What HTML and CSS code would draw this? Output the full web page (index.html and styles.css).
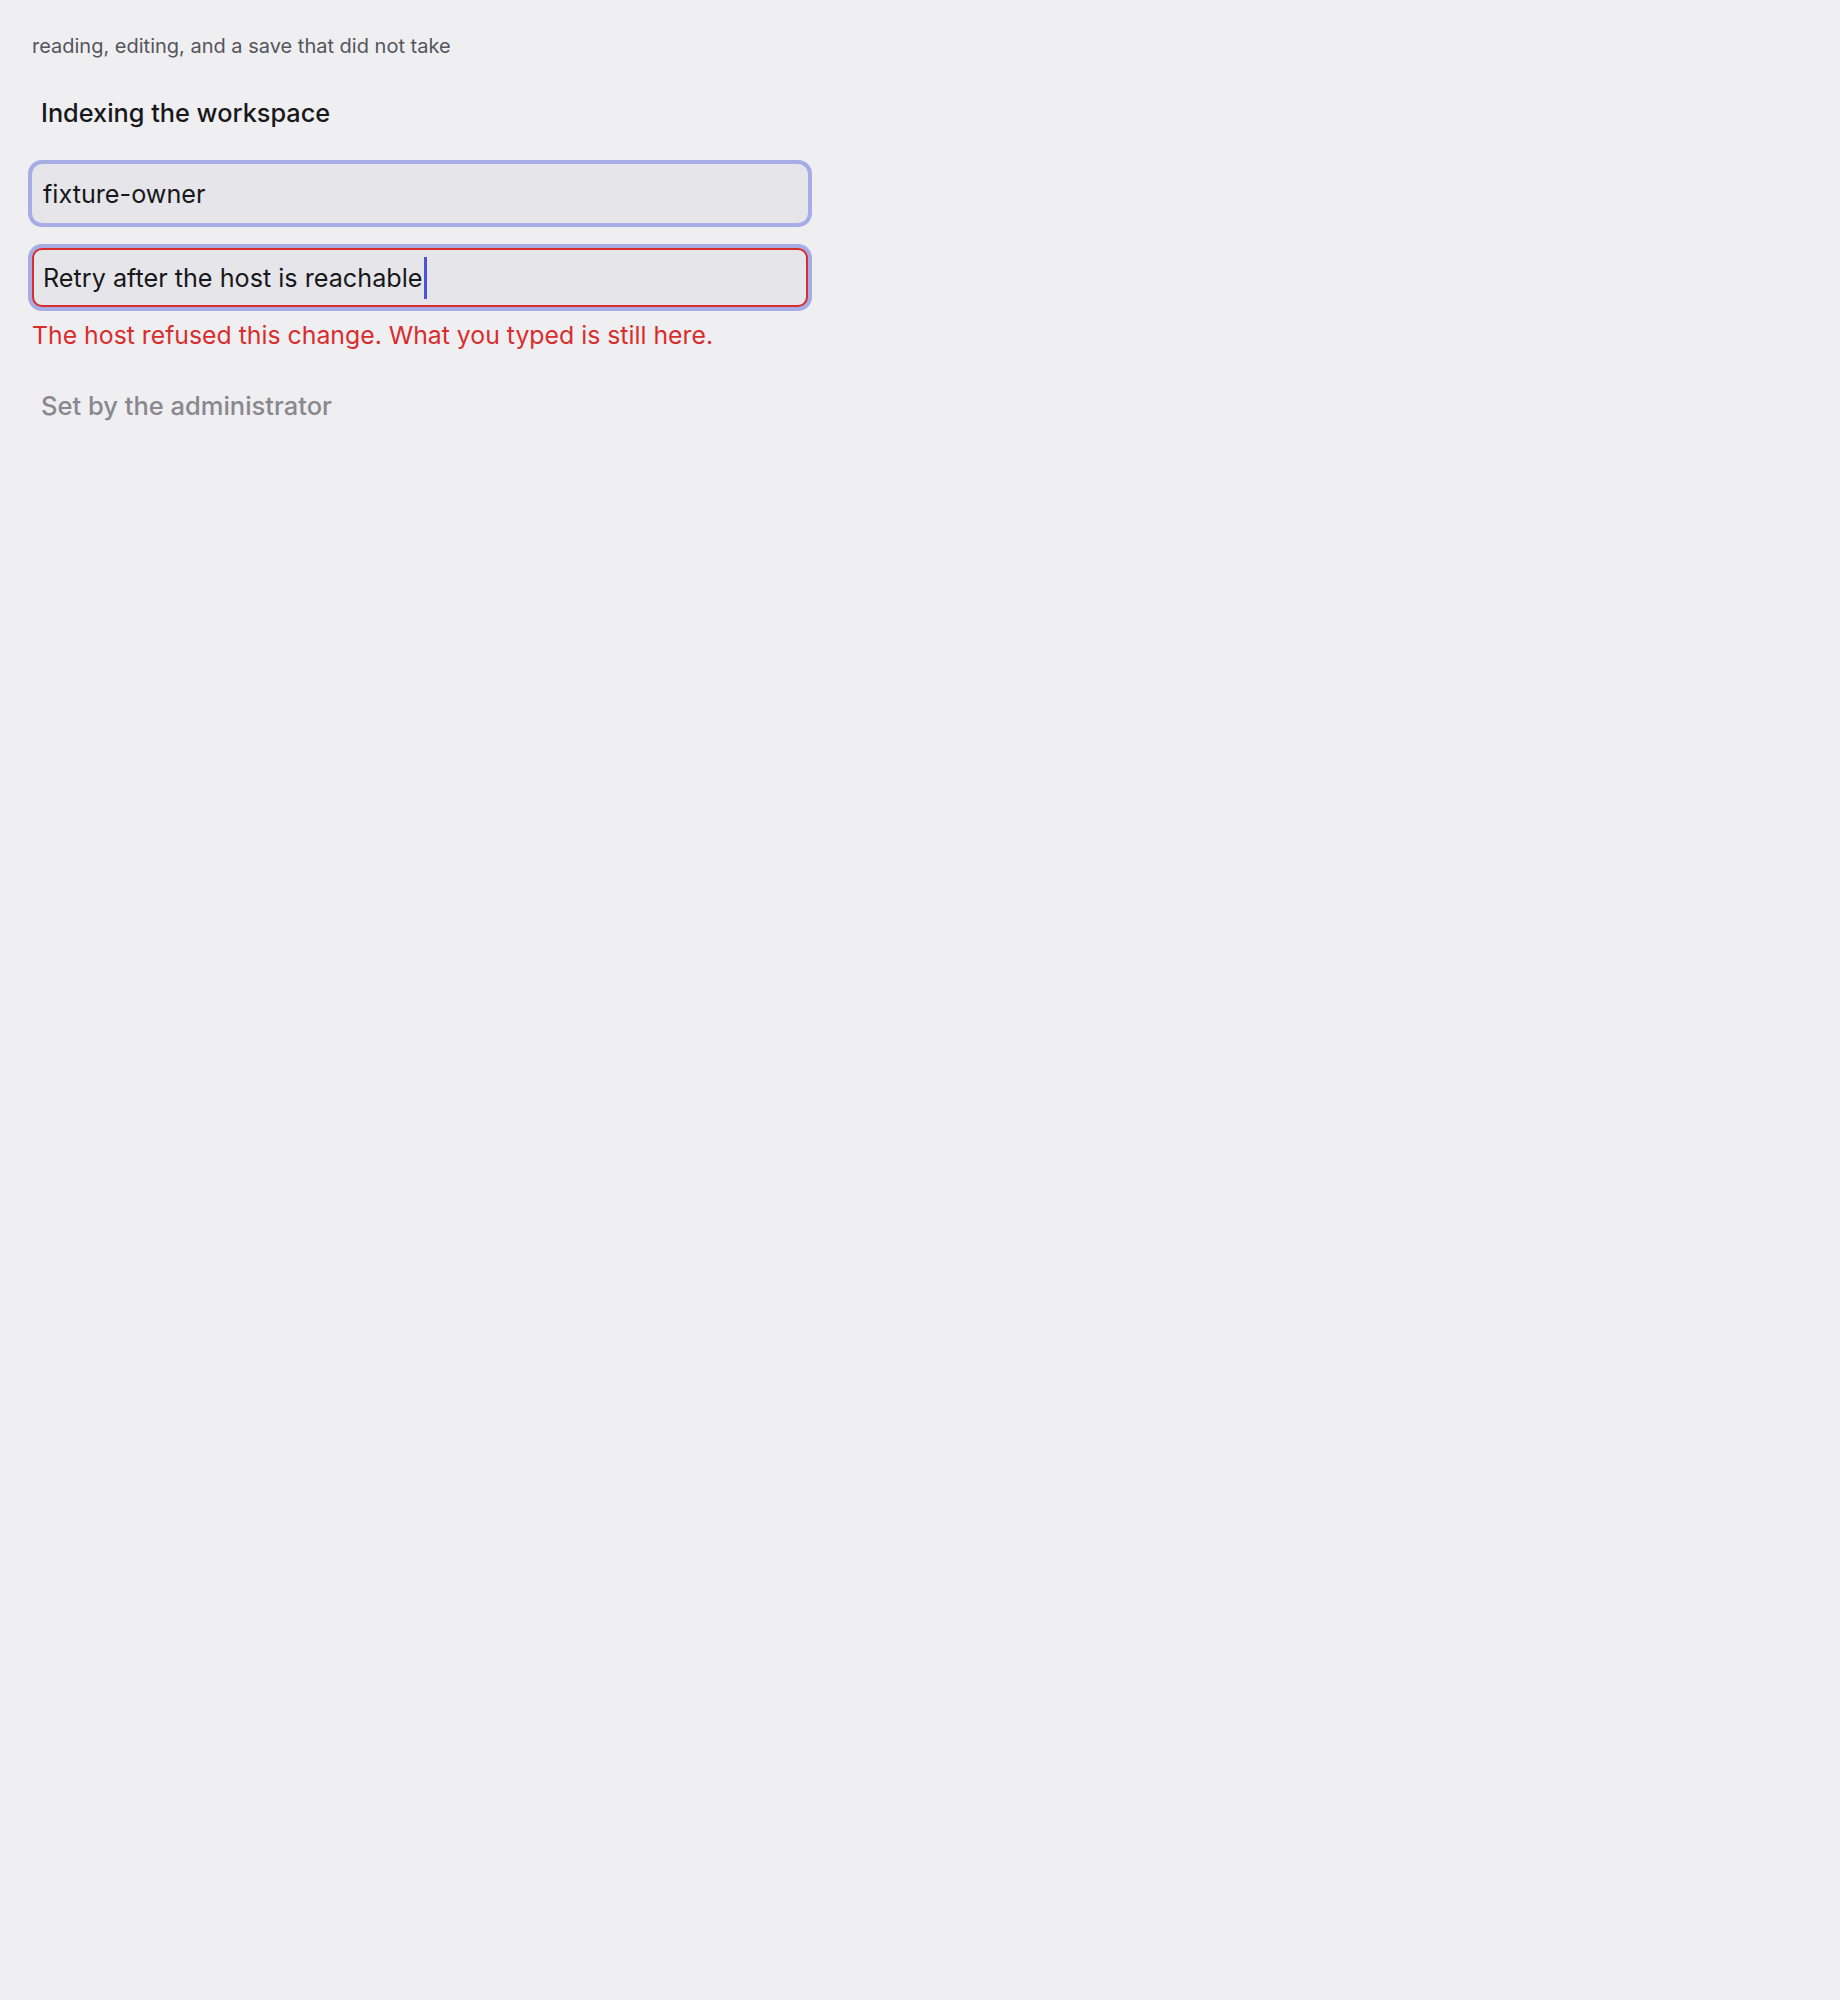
FILE: index.html
```html
<!DOCTYPE html>
<html lang="en">
<head>
<meta charset="utf-8">
<title>Indexing the workspace</title>
<link rel="stylesheet" href="styles.css">
</head>
<body>
<main class="page">
  <p class="subtitle">reading, editing, and a save that did not take</p>
  <h2 class="heading">Indexing the workspace</h2>
  <div class="fields">
    <div class="field field-focus"><span class="value">fixture-owner</span></div>
    <div class="field-group">
      <div class="field field-error"><span class="value">Retry after the host is reachable</span><span class="caret"></span></div>
      <p class="error">The host refused this change. What you typed is still here.</p>
    </div>
  </div>
  <p class="admin">Set by the administrator</p>
</main>
</body>
</html>
```

FILE: styles.css
```css
html, body {
  margin: 0;
  padding: 0;
  background: #efeff2;
}
body {
  font-family: Inter, "Noto Sans", "Liberation Sans", sans-serif;
  color: #18181b;
}
.page {
  width: 776px;
  padding: 34px 32px;
  display: flex;
  flex-direction: column;
}
.subtitle {
  margin: 0;
  font-size: 20px;
  line-height: 24px;
  color: #55555c;
}
.heading {
  margin: 39px 0 0;
  padding: 0 9px;
  font-size: 25.3px;
  line-height: 32px;
  font-weight: 500;
  color: #18181b;
}
.fields {
  margin-top: 35px;
  display: flex;
  flex-direction: column;
  gap: 25px;
}
.field {
  box-sizing: border-box;
  height: 59px;
  border-radius: 10px;
  border: 2px solid #e6e6ea;
  background: #e6e6ea;
  box-shadow: 0 0 0 4px #a6ace4;
  padding: 0 9px;
  display: flex;
  align-items: center;
  font-size: 25.2px;
  line-height: 30px;
  color: #18181b;
}
.field-error {
  border-color: #d92d2d;
}
.caret {
  display: inline-block;
  width: 3px;
  height: 42px;
  margin-left: 1px;
  background: #4b54d6;
}
.error {
  margin: 13px 0 0;
  font-size: 24.8px;
  line-height: 30px;
  color: #d92d2d;
}
.admin {
  margin: 41px 0 0;
  padding: 0 9px;
  font-size: 25.5px;
  line-height: 30px;
  font-weight: 500;
  color: #88888e;
}
```
